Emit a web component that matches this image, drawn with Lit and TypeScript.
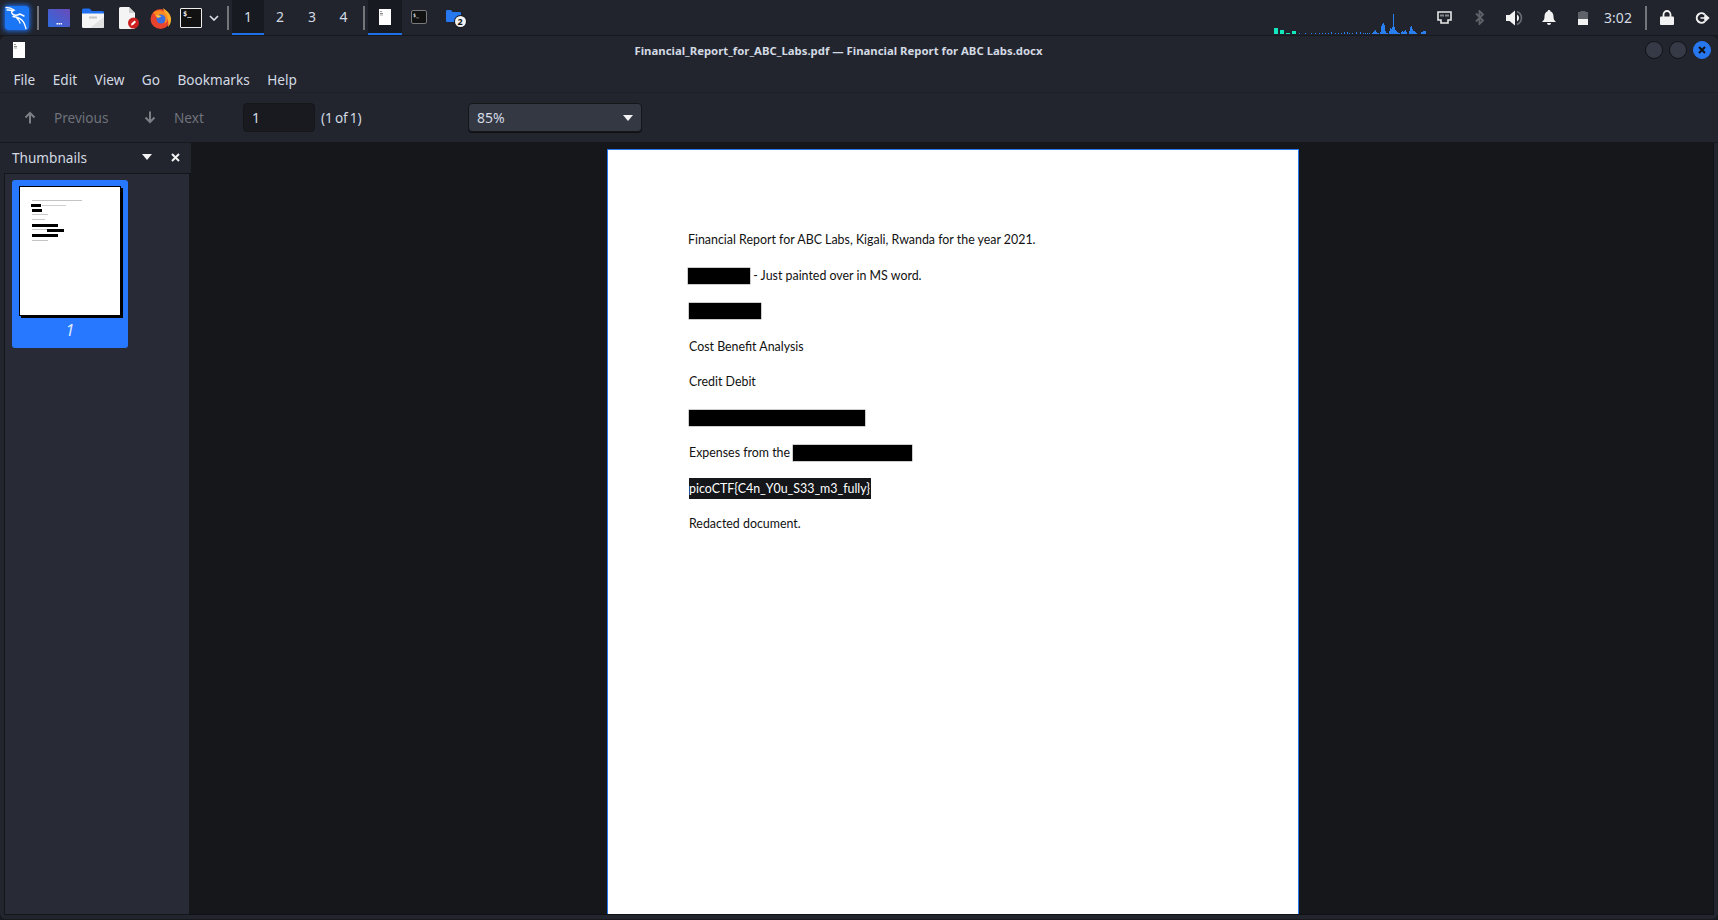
import { LitElement, html, css, svg } from "lit";
import { customElement } from "lit/decorators.js";

const blueBars: [number, number][] = [
  [1299,1],[1305,1],[1311,1],[1315,1],[1319,1],[1322,1],[1325,1],[1328,1],[1331,2],[1335,1],[1338,1],[1341,1],[1344,2],[1347,2],[1349,1],[1352,1],[1356,2],[1360,2],[1363,1],[1365,1],[1367,1],[1369,1],[1372,1],[1375,1],[1378,1],[1381,1],[1384,1],[1387,1],[1390,1],[1393,1],[1396,1],[1399,1],
  [1372,1],[1373,2],[1374,3],[1375,4],[1376,2],[1377,1],[1380,2],[1381,8],[1382,10],[1383,11],[1384,9],[1385,3],[1386,1],
  [1389,3],[1390,6],[1391,5],[1392,7],[1393,20],[1394,7],[1395,4],[1396,3],[1397,2],[1398,1],
  [1401,2],[1402,3],[1403,2],[1404,3],[1405,4],[1406,2],[1409,3],[1410,7],[1411,8],[1412,5],[1413,3],[1414,3],[1415,2],[1416,1],[1421,2],[1422,2],[1423,3],[1424,3],[1425,3]
];

const thumbRects: [number, number, number, number, string][] = [
  [12,13,50,1,"#c4c4c4"],[11,17,10,3,"#000"],[22,18,24,1,"#cfcfcf"],[12,22,10,3,"#000"],[12,27,16,1,"#c8c8c8"],[12,32,13,1,"#c8c8c8"],
  [12,37,26,3,"#000"],[12,42,15,1,"#c8c8c8"],[27,42,17,3,"#000"],[12,47,26,3,"#000"],[12,53,16,1,"#c4c4c4"]
];

const kali = html`<svg class="logo" width="24" height="24" viewBox="0 0 24 24"><rect width="24" height="24" rx="3" fill="#1a76f5"/><path d="M1 1.500C4 1.500 7 2.500 9 4 7 4.500 6 5.500 7 7.500 8.500 9.500 12 9.500 15 8L19 10M2 4C4 3.800 6 4 8 5M8 10.500C12 11 17 13 19 17 20 19 20.500 21 21 22.500M12 12.500C14 14 15 15 15 17" fill="none" stroke="#fff" stroke-width="1.400" stroke-linecap="round"/></svg>`;

const launcher = html`<svg width="22" height="18" viewBox="0 0 22 18"><defs><linearGradient id="lg" x1="0" y1="1" x2="1" y2="0"><stop offset="0" stop-color="#2f6be0"/><stop offset="1" stop-color="#6a4bb8"/></linearGradient></defs><rect width="22" height="18" rx="1" fill="url(#lg)"/><rect x="8.500" y="14" width="1.500" height="1.500" fill="#fff"/><rect x="10.500" y="14" width="1.500" height="1.500" fill="#fff"/><rect x="12.500" y="14" width="1.500" height="1.500" fill="#fff"/></svg>`;

const files = html`<svg width="22" height="20" viewBox="0 0 22 20"><path d="M0 2a1.500 1.500 0 0 1 1.500-1.500h6L10 3h10.500A1.500 1.500 0 0 1 22 4.500V8H0z" fill="#1f6ff0"/><path d="M0 5.500h22V18.500a1.500 1.500 0 0 1-1.500 1.500H1.500A1.500 1.500 0 0 1 0 18.500z" fill="#f5f5f5"/><path d="M22 9V18.500a1.500 1.500 0 0 1-1.500 1.500H8z" fill="#e2e2e2"/><rect x="7" y="8.500" width="8" height="2" rx=".5" fill="#c4c4c4"/></svg>`;

const docEdit = html`<svg width="22" height="22" viewBox="0 0 22 22"><path d="M1 1.500A1.500 1.500 0 0 1 2.500 0H11l6 6v14.500a1.500 1.500 0 0 1-1.500 1.500h-13A1.500 1.500 0 0 1 1 20.500z" fill="#f4f4f4"/><path d="M11 0l6 6h-6z" fill="#cfcfcf"/><circle cx="15.500" cy="16" r="5.500" fill="#cc1f1f"/><path d="M13 18.500l.5-2 3-3 1.500 1.500-3 3z" fill="#fff"/></svg>`;

const firefox = html`<svg width="22" height="22" viewBox="0 0 22 22"><circle cx="10.500" cy="12" r="10" fill="#e8432e"/><path d="M13 1c2 2 7 4 8 10 .5 4-1 7-3 9 1-5 0-8-2-10-1-3-2-6-3-9z" fill="#fbb02e"/><path d="M3 6c2-2 5-3 8-2.500 3 .5 6 3 6.500 7 .5 3-1 5-3 6.500 1-3 0-5-1.500-6L7 9z" fill="#ff8a1f"/><circle cx="11" cy="12" r="4.500" fill="#3b6fe0"/><path d="M5 8.500c2-.5 4.500-.5 6.500 1L8 11z" fill="#fdc13a"/></svg>`;

const chevron = html`<svg width="10" height="6" viewBox="0 0 10 6"><path d="M1 1l4 4 4-4" fill="none" stroke="#d8dce3" stroke-width="1.700"/></svg>`;

const tinyDoc = html`<svg width="12" height="16" viewBox="0 0 12 16"><rect width="12" height="16" fill="#fff"/><rect x="1" y="2" width="2" height="1" fill="#999"/><rect x="1" y="4" width="3" height="1" fill="#888"/><rect x="1" y="5.500" width="3" height="1" fill="#aaa"/></svg>`;

const folder = html`<svg class="fold" width="15" height="12" viewBox="0 0 15 12"><path d="M0 1a1 1 0 0 1 1-1h4l1.500 2H14a1 1 0 0 1 1 1v8a1 1 0 0 1-1 1H1a1 1 0 0 1-1-1z" fill="#2777ee"/></svg>`;

const net = html`<svg width="15" height="13" viewBox="0 0 15 13"><path d="M1 1h13v8h-3v3H4V9H1z" fill="none" stroke="#e6e6e6" stroke-width="1.600"/><path d="M4 3.500v2M6 3.500v2M9 3.500v2M11 3.500v2" stroke="#e6e6e6"/></svg>`;
const bt = html`<svg width="13" height="15" viewBox="0 0 13 15"><path d="M3 3.500l7 7L6.500 14V1L10 4.500l-7 7" fill="none" stroke="#5f6269" stroke-width="1.800"/></svg>`;
const vol = html`<svg width="18" height="16" viewBox="0 0 18 16"><path d="M0 5h3.500L9 .5v15L3.500 11H0z" fill="#f2f2f2"/><path d="M11 1.500a7 7 0 0 1 0 13" fill="none" stroke="#6a6d73" stroke-width="1.600"/><path d="M11 4.500a4 4 0 0 1 0 7z" fill="#f2f2f2"/></svg>`;
const bell = html`<svg width="14" height="15" viewBox="0 0 14 15"><path d="M7 0c.8 0 1.300.5 1.300 1.200C10.500 2 11.500 4 11.500 6.500c0 2.500.7 4 2.500 5.500H0c1.800-1.500 2.500-3 2.500-5.500 0-2.500 1-4.500 3.200-5.300C5.700.5 6.200 0 7 0z" fill="#f2f2f2"/><path d="M5 13h4a2 2 0 0 1-4 0z" fill="#f2f2f2"/></svg>`;
const battery = html`<svg width="10" height="14" viewBox="0 0 10 14"><path d="M2.500 0h5v1H10v13H0V1h2.500z" fill="#5f6269"/><rect y="8" width="10" height="6" fill="#f2f2f2"/></svg>`;
const lock = html`<svg width="14" height="15" viewBox="0 0 14 15"><path d="M3.500 7V4.500a3.500 3.500 0 0 1 7 0V7" fill="none" stroke="#f2f2f2" stroke-width="1.800"/><rect y="6.500" width="14" height="8.500" rx="1" fill="#f2f2f2"/></svg>`;
const logout = html`<svg width="15" height="12" viewBox="0 0 15 12"><path d="M9.500 2.200A4.800 4.800 0 1 0 9.500 9.800" fill="none" stroke="#f2f2f2" stroke-width="2"/><path d="M5.500 6h6M10 2.800L13.500 6 10 9.200z" stroke="#f2f2f2" fill="#f2f2f2" stroke-width="1.500"/></svg>`;

const arrowUp = html`<svg width="12" height="13" viewBox="0 0 12 13"><path d="M6 12.500V2M1.500 6.500L6 2l4.500 4.500" fill="none" stroke="#7c7f86" stroke-width="2"/></svg>`;
const arrowDown = html`<svg width="12" height="13" viewBox="0 0 12 13"><path d="M6 .5V11M1.500 6.500L6 11l4.500-4.500" fill="none" stroke="#7c7f86" stroke-width="2"/></svg>`;
const caret = html`<svg width="10" height="6" viewBox="0 0 10 6"><path d="M0 0h10L5 6z" fill="#f2f2f2"/></svg>`;

@customElement("app-root")
export class AppRoot extends LitElement {
  static styles = css`
    :host { display: flex; flex-direction: column; width: 1718px; height: 920px; background: #17191e; color: #d3dae3; font-family: "Noto Sans", sans-serif; overflow: hidden; }
    svg { display: block; flex: none; }
    .panel { height: 35px; flex: none; display: flex; align-items: center; background: #21242c; position: relative; }
    .logo-wrap { margin-left: 5px; width: 24px; height: 24px; border-radius: 3px; box-shadow: 0 0 5px 1px #1f6ff0; }
    .sep { width: 2px; height: 24px; background: #74767b; flex: none; }
    .launch { display: flex; align-items: center; justify-content: center; height: 35px; flex: none; }
    .term { width: 22px; height: 20px; box-sizing: border-box; border: 1px solid #eee; border-radius: 1px; background: #111; color: #eee; font: 700 7px/9px "DejaVu Sans Mono", monospace; padding: 1px 2px; }
    .ws { height: 35px; flex: none; display: flex; align-items: center; justify-content: center; font-size: 14px; color: #d3dae3; box-sizing: border-box; border-bottom: 2px solid transparent; }
    .ws.on { background: #171a20; border-bottom-color: #1f6fe5; }
    .task { height: 35px; flex: none; display: flex; align-items: center; justify-content: center; box-sizing: border-box; border-bottom: 2px solid transparent; }
    .task.on { background: #171a20; border-bottom-color: #1f6fe5; }
    .miniterm { width: 16px; height: 14px; box-sizing: border-box; border: 1px solid #77797d; border-radius: 2px; background: #111; color: #ddd; font: 700 5px/6px "DejaVu Sans Mono", monospace; padding: 1px; }
    .foldwrap { position: relative; width: 15px; height: 12px; margin-top: -1px; }
    .badge { position: absolute; left: 9px; top: 6px; width: 11px; height: 11px; border-radius: 50%; background: #f2f2f2; color: #111; font: 700 9px/11px "Noto Sans", sans-serif; text-align: center; box-shadow: 0 0 0 1px #1a1c22; }
    .spec { position: absolute; left: 1274px; top: 14px; }
    .tray { margin-left: auto; display: flex; align-items: center; height: 35px; }
    .ti { display: flex; justify-content: center; align-items: center; flex: none; }
    .time { font-size: 14px; color: #d3dae3; width: 36px; text-align: center; flex: none; }

    .window { flex: none; height: 884px; background: #22252e; border-radius: 6px; border-top: 1px solid #16181d; display: flex; flex-direction: column; padding: 0 0 4px; box-sizing: border-box; }
    .titlebar { height: 28px; flex: none; display: flex; align-items: center; position: relative; }
    .appicon { margin-left: 13px; }
    .title { position: absolute; left: 0; right: 0; text-align: center; font-size: 11.350px; font-weight: 700; color: #d3dae3; padding-right: 41px; }
    .wbtns { margin-left: auto; margin-right: 7px; display: flex; gap: 6px; }
    .wb { width: 18px; height: 18px; box-sizing: border-box; border-radius: 50%; background: #363a46; border: 1px solid #111318; display: flex; align-items: center; justify-content: center; }
    .wb.close { background: #2777ee; border-color: #2777ee; }
    .menu { height: 28px; flex: none; display: flex; align-items: center; padding: 2px 0 0 13.500px; box-sizing: border-box; gap: 17.500px; font-size: 13.600px; }
    .toolbar { height: 51px; flex: none; display: flex; align-items: center; font-size: 13.600px; box-sizing: border-box; border-bottom: 1px solid #16181d; border-top: 1px solid #1e2028; }
    .navbtn { display: flex; align-items: center; gap: 18px; color: #6f727a; flex: none; }
    .entry { margin-left: 38px; width: 72px; height: 29px; box-sizing: border-box; border: 1px solid #14161a; border-radius: 4px; background: #181a20; padding-left: 8px; font-size: 14px; line-height: 27px; color: #d3dae3; flex: none; }
    .of { margin-left: 6px; width: 147px; flex: none; font-size: 13.600px; word-spacing: -1.500px; }
    .combo { width: 174px; height: 29px; box-sizing: border-box; border: 1px solid #14161a; border-radius: 4px; background: #343843; padding: 0 8px; display: flex; align-items: center; justify-content: space-between; font-size: 14px; box-shadow: 0 1px 0 #0f1014; flex: none; }

    .main { flex: 1; min-height: 0; display: flex; padding: 0 4px; background: #22252e; }
    .side { width: 187px; flex: none; display: flex; flex-direction: column; }
    .sidehead { height: 30px; flex: none; display: flex; align-items: center; padding: 0 1px 2px 8px; font-size: 13.600px; box-sizing: border-box; }
    .sidehead span { flex: 1; }
    .sc { width: 29px; display: flex; justify-content: center; flex: none; }
    .list { flex: 1; background: #282a36; border: 1px solid #14161a; border-right-width: 2px; padding: 6px 7px; min-height: 0; }
    .thumb { width: 116px; height: 168px; background: #2777ff; border-radius: 3px; display: flex; flex-direction: column; align-items: center; padding-top: 6px; box-sizing: border-box; }
    .tpage { width: 102px; height: 130px; background: #fff; border: 1px solid #000; box-sizing: border-box; box-shadow: 2px 2px 0 #000; flex: none; }
    .tnum { font-size: 16px; font-style: italic; color: #dfeaff; margin-top: 3px; line-height: 22px; }
    .view { flex: 1; min-width: 0; background: #15171b; display: flex; justify-content: center; padding: 6px 0 0 2px; overflow: hidden; border: solid #101115; border-width: 0 1px 1px 0; }
    .page { width: 692px; height: 1000px; flex: none; background: #fff; box-sizing: border-box; border: 1px solid #2777ee; padding: 81px 0 0 81px; color: #111; font: 12.400px/18px Lato, sans-serif; display: flex; flex-direction: column; gap: 17.500px; }
    .line { display: flex; align-items: center; height: 18px; white-space: pre; }
    .line.out { margin-left: -1px; }
    .r { background: #000; height: 16px; flex: none; box-shadow: 0 0 0 .5px #999; }
    .flag { background: #14161a; color: #fff; height: 21px; line-height: 21px; width: 182px; flex: none; overflow: hidden; }
  `;

  render() {
    const spec = svg`${[[1274,6],[1280,4],[1286,1],[1292,3]].map(([x,h]) => svg`<rect x=${x-1274} y=${20-h} width="4" height=${h} fill="#12e8c0"/>`)}${blueBars.map(([x,h]) => svg`<rect x=${x-1274} y=${20-h} width="1" height=${h} fill="#2a7ff0"/>`)}`;
    return html`
      <div class="panel">
        <div class="logo-wrap">${kali}</div>
        <div class="sep" style="margin-left:8px"></div>
        <div class="launch" style="margin-left:9px;width:22px">${launcher}</div>
        <div class="launch" style="margin-left:12px;width:22px">${files}</div>
        <div class="launch" style="margin-left:14px;width:22px">${docEdit}</div>
        <div class="launch" style="margin-left:10px;width:22px">${firefox}</div>
        <div class="launch" style="margin-left:8px;width:22px"><div class="term">$_</div></div>
        <div class="launch" style="margin-left:7px;width:10px">${chevron}</div>
        <div class="sep" style="margin-left:8px"></div>
        <div class="ws on" style="margin-left:3px;width:32px">1</div>
        <div class="ws" style="width:32px">2</div>
        <div class="ws" style="width:32px">3</div>
        <div class="ws" style="width:31px">4</div>
        <div class="sep" style="margin-left:4px"></div>
        <div class="task on" style="margin-left:3px;width:34px">${tinyDoc}</div>
        <div class="task" style="width:34px"><div class="miniterm">$_</div></div>
        <div class="task" style="width:34px"><div class="foldwrap">${folder}<span class="badge">2</span></div></div>
        <svg class="spec" width="152" height="20" viewBox="0 0 152 20">${spec}</svg>
        <div class="tray">
          <div class="ti" style="width:15px">${net}</div>
          <div class="ti" style="width:13px;margin-left:21px">${bt}</div>
          <div class="ti" style="width:18px;margin-left:20px">${vol}</div>
          <div class="ti" style="width:14px;margin-left:18px">${bell}</div>
          <div class="ti" style="width:10px;margin-left:22px">${battery}</div>
          <div class="time" style="margin-left:12px">3:02</div>
          <div class="sep" style="margin-left:9px"></div>
          <div class="ti" style="width:14px;margin-left:13px">${lock}</div>
          <div class="ti" style="width:15px;margin-left:21px;margin-right:8px">${logout}</div>
        </div>
      </div>
      <div class="window">
        <div class="titlebar">
          <div class="appicon">${tinyDoc}</div>
          <div class="title">Financial_Report_for_ABC_Labs.pdf — Financial Report for ABC Labs.docx</div>
          <div class="wbtns">
            <div class="wb"></div>
            <div class="wb"></div>
            <div class="wb close"><svg width="8" height="8" viewBox="0 0 8 8"><path d="M1 1l6 6M7 1L1 7" stroke="#111" stroke-width="2"/></svg></div>
          </div>
        </div>
        <div class="menu"><span>File</span><span>Edit</span><span>View</span><span>Go</span><span>Bookmarks</span><span>Help</span></div>
        <div class="toolbar">
          <div class="navbtn" style="margin-left:24px;width:86px">${arrowUp}<span>Previous</span></div>
          <div class="navbtn" style="margin-left:34px;width:61px">${arrowDown}<span>Next</span></div>
          <div class="entry">1</div>
          <div class="of">(1 of 1)</div>
          <div class="combo"><span>85%</span>${caret}</div>
        </div>
        <div class="main">
          <div class="side">
            <div class="sidehead"><span>Thumbnails</span><div class="sc">${caret}</div><div class="sc"><svg width="9" height="9" viewBox="0 0 9 9"><path d="M1 1l7 7M8 1L1 8" stroke="#f2f2f2" stroke-width="2"/></svg></div></div>
            <div class="list">
              <div class="thumb">
                <div class="tpage"><svg width="100" height="128" viewBox="0 0 100 128">${thumbRects.map(([x,y,w,h,c]) => svg`<rect x=${x} y=${y} width=${w} height=${h} fill=${c}/>`)}</svg></div>
                <div class="tnum">1</div>
              </div>
            </div>
          </div>
          <div class="view">
            <div class="page">
              <div class="line out">Financial Report for ABC Labs, Kigali, Rwanda for the year 2021.</div>
              <div class="line out"><span class="r" style="width:62px"></span><span> - Just painted over in MS word.</span></div>
              <div class="line"><span class="r" style="width:72px"></span></div>
              <div class="line">Cost Benefit Analysis</div>
              <div class="line">Credit Debit</div>
              <div class="line"><span class="r" style="width:176px"></span></div>
              <div class="line"><span>Expenses from the </span><span class="r" style="width:119px"></span></div>
              <div class="line"><span class="flag">picoCTF{C4n_Y0u_S33_m3_fully}</span></div>
              <div class="line">Redacted document.</div>
            </div>
          </div>
        </div>
      </div>
    `;
  }
}
